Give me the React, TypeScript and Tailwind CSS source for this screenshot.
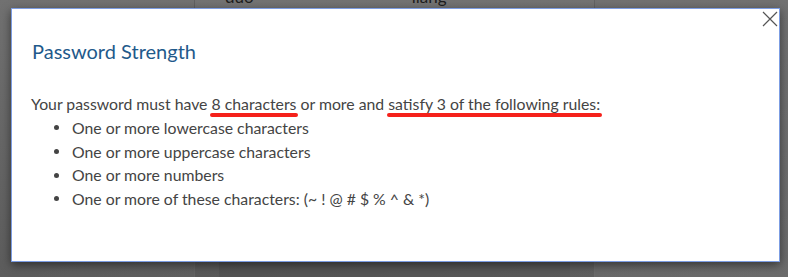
import React from "react";

const rules = [
  "One or more lowercase characters",
  "One or more uppercase characters",
  "One or more numbers",
  "One or more of these characters: (~ ! @ # $ % ^ & *)",
];

export default function App() {
  return (
    <div
      className="relative w-[788px] h-[277px] overflow-hidden bg-[#707070]"
      style={{ fontFamily: "Lato, 'Open Sans', sans-serif" }}
    >
      {/* background page */}
      <div className="absolute inset-0 flex">
        <div className="w-[195px] h-full bg-gradient-to-b from-[#717171] to-[#5c5c5c] border-r border-[#606060]" />
        <div className="w-[400px] h-full flex flex-col justify-between bg-gradient-to-b from-[#737373] to-[#555] border-r border-[#626262]">
          <div className="flex gap-[158px] pl-[30px] -mt-[14px] text-[17px] leading-[22px] text-[#1e1e1e]">
            <span>duo</span>
            <span>liang</span>
          </div>
          <div className="ml-[24px] mr-[24px] h-[16px] bg-[#4f4f4f]" />
        </div>
        <div className="flex-1 h-full bg-gradient-to-b from-[#717171] to-[#5f5f5f]" />
      </div>
      <div className="absolute inset-0 bg-gradient-to-br from-transparent via-transparent to-[#ffffff14]" />

      {/* modal */}
      <div className="absolute left-[11px] top-[8px] w-[769px] h-[254px] bg-white border border-[#7c9de3] shadow-[0_3px_9px_rgba(0,0,0,0.5)]">
        <button className="absolute right-[1px] top-[1px] w-[17px] h-[17px] flex items-center justify-center">
          <svg width="16" height="16" viewBox="0 0 16 16">
            <path d="M1 1 L15 15 M15 1 L1 15" stroke="#555" strokeWidth="1.2" fill="none" />
          </svg>
        </button>
        <div className="pl-[19px] pt-[28px]">
          <h2 className="ml-[1px] text-[20px] leading-[28px] text-[#1f5a8b]">Password Strength</h2>
          <div className="mt-[27px] text-[15.8px] leading-[24px] text-[#444]">
            <p>
              Your password must have{" "}
              <span className="relative">
                8 characters
                <span className="absolute left-[-2px] right-[-2px] bottom-[-4px] h-[4px] rounded-full bg-[#f5211b]" />
              </span>{" "}
              or more and{" "}
              <span className="relative">
                satisfy 3 of the following rules:
                <span className="absolute left-[-1px] right-[-2px] bottom-[-4px] h-[4px] rounded-full bg-[#f5211b]" />
              </span>
            </p>
            <ul className="flex flex-col pl-[23px]">
              {rules.map((r) => (
                <li key={r} className="flex items-center gap-[13px] h-[23.7px]">
                  <span className="w-[5px] h-[5px] rounded-full bg-[#444]" />
                  <span>{r}</span>
                </li>
              ))}
            </ul>
          </div>
        </div>
      </div>
    </div>
  );
}
